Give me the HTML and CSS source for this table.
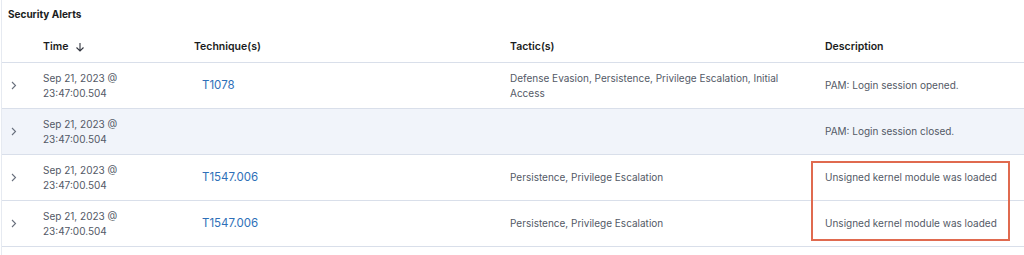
FILE: index.html
```html
<!DOCTYPE html>
<html>
<head>
<meta charset="utf-8">
<link rel="stylesheet" href="styles.css">
</head>
<body>
<div class="panel">
  <h2 class="title">Security Alerts</h2>
  <div class="table">
    <div class="row head">
      <div class="cell"></div>
      <div class="cell">Time <svg class="sort" width="10" height="10" viewBox="0 0 10 10"><path d="M5 1v8M1.5 5.5L5 9l3.5-3.5" fill="none" stroke="#343741" stroke-width="1.1"/></svg></div>
      <div class="cell">Technique(s)</div>
      <div class="cell">Tactic(s)</div>
      <div class="cell">Description</div>
    </div>
    <div class="row">
      <div class="cell chev"><svg width="6" height="9" viewBox="0 0 6 9"><path d="M1 1l3.5 3.5L1 8" fill="none" stroke="#69707d" stroke-width="1.1"/></svg></div>
      <div class="cell">Sep 21, 2023 @<br>23:47:00.504</div>
      <div class="cell tech"><a>T1078</a></div>
      <div class="cell">Defense Evasion, Persistence, Privilege Escalation, Initial Access</div>
      <div class="cell">PAM: Login session opened.</div>
    </div>
    <div class="row hover">
      <div class="cell chev"><svg width="6" height="9" viewBox="0 0 6 9"><path d="M1 1l3.5 3.5L1 8" fill="none" stroke="#69707d" stroke-width="1.1"/></svg></div>
      <div class="cell">Sep 21, 2023 @<br>23:47:00.504</div>
      <div class="cell tech"></div>
      <div class="cell"></div>
      <div class="cell">PAM: Login session closed.</div>
    </div>
    <div class="row">
      <div class="cell chev"><svg width="6" height="9" viewBox="0 0 6 9"><path d="M1 1l3.5 3.5L1 8" fill="none" stroke="#69707d" stroke-width="1.1"/></svg></div>
      <div class="cell">Sep 21, 2023 @<br>23:47:00.504</div>
      <div class="cell tech"><a>T1547.006</a></div>
      <div class="cell">Persistence, Privilege Escalation</div>
      <div class="cell">Unsigned kernel module was loaded</div>
    </div>
    <div class="row">
      <div class="cell chev"><svg width="6" height="9" viewBox="0 0 6 9"><path d="M1 1l3.5 3.5L1 8" fill="none" stroke="#69707d" stroke-width="1.1"/></svg></div>
      <div class="cell">Sep 21, 2023 @<br>23:47:00.504</div>
      <div class="cell tech"><a>T1547.006</a></div>
      <div class="cell">Persistence, Privilege Escalation</div>
      <div class="cell">Unsigned kernel module was loaded</div>
    </div>
    <div class="highlight"></div>
  </div>
</div>
</body>
</html>
```

FILE: styles.css
```css
html, body {
  margin: 0;
  padding: 0;
  background: #ffffff;
}
body {
  font-family: Inter, "Noto Sans", sans-serif;
  font-size: 10px;
  color: #535966;
  width: 1024px;
  height: 255px;
  overflow: hidden;
}
.panel {
  margin-left: 1px;
  border-left: 1px solid #e6eaf1;
  height: 255px;
}
.title {
  margin: 0;
  padding: 8px 0 0 6px;
  height: 24px;
  box-sizing: border-box;
  font-size: 10px;
  font-weight: 700;
  color: #1a1c21;
  line-height: 13px;
}
.table {
  position: relative;
}
.row {
  display: grid;
  grid-template-columns: 33px 151px 316px 315px 207px;
  height: 46px;
  border-bottom: 1px solid #d9dfea;
  box-sizing: border-box;
  align-items: center;
}
.row.head {
  height: 39px;
  color: #1a1c21;
  font-weight: 600;
  font-size: 10.5px;
  padding-top: 7px;
}
.row.hover {
  background: #f1f4fa;
}
.cell {
  padding: 0 8px;
  line-height: 15px;
}
.head .cell {
  display: flex;
  align-items: center;
  gap: 7px;
}
.sort {
  display: block;
}
.chev {
  padding: 0 0 0 9px;
  display: flex;
  align-items: center;
}
.chev svg { display: block; }
.tech {
  padding-left: 16px;
}
.tech a {
  color: #2e6fb8;
  font-size: 11.5px;
}
.highlight {
  position: absolute;
  left: 809px;
  top: 137px;
  width: 199px;
  height: 80px;
  border: 2px solid #e06a4f;
  box-sizing: border-box;
}
```
